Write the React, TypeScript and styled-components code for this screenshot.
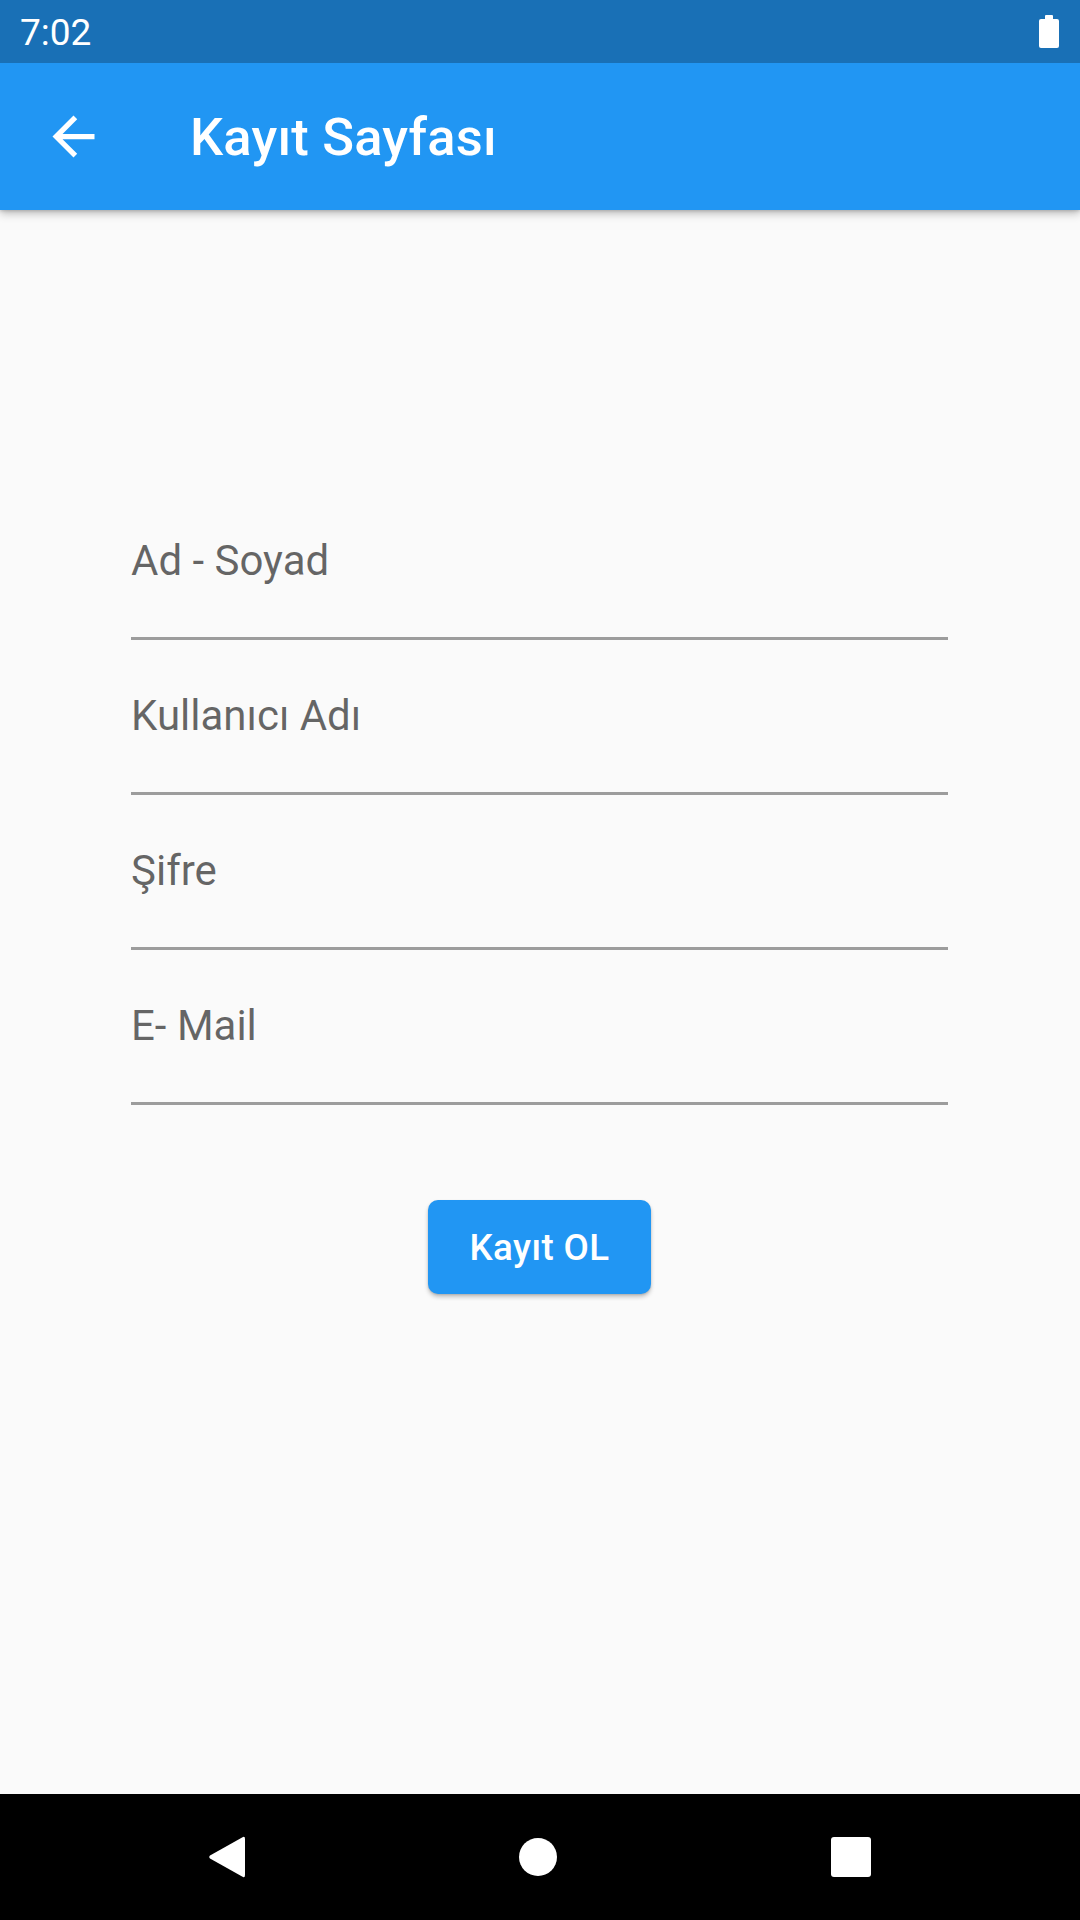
import React from 'react';
import styled, { createGlobalStyle } from 'styled-components';

const GlobalStyle = createGlobalStyle`
  html, body {
    margin: 0;
    padding: 0;
    background: #fafafa;
  }
  body {
    font-family: Roboto, "Noto Sans", "Liberation Sans", sans-serif;
  }
`;

const Screen = styled.div`
  width: 1080px;
  height: 1920px;
  display: flex;
  flex-direction: column;
  background: #fafafa;
  overflow: hidden;
`;

const StatusBar = styled.div`
  height: 63px;
  flex-shrink: 0;
  background: #1970b6;
  display: flex;
  align-items: center;
  justify-content: space-between;
  padding: 0 21px 0 20px;
  color: #fff;
  font-size: 37px;
  position: relative;
  z-index: 3;
`;

const Time = styled.span`
  line-height: 1;
  margin-top: 2px;
`;

const AppBar = styled.header`
  height: 147px;
  flex-shrink: 0;
  background: #2196f3;
  display: flex;
  align-items: center;
  padding-left: 42px;
  color: #fff;
  position: relative;
  z-index: 2;
  box-shadow: 0 3px 9px rgba(0, 0, 0, 0.28), 0 1px 3px rgba(0, 0, 0, 0.15);
`;

const BackButton = styled.button`
  width: 63px;
  height: 63px;
  padding: 0;
  border: none;
  background: transparent;
  display: flex;
  align-items: center;
  justify-content: center;
  cursor: pointer;
  margin-right: 85px;
`;

const Title = styled.h1`
  margin: 0;
  font-size: 52.5px;
  font-weight: 500;
  letter-spacing: 0.2px;
`;

const Body = styled.main`
  flex: 1;
  padding: 275px 132px 0 131px;
  display: flex;
  flex-direction: column;
`;

const Field = styled.label`
  display: block;
  padding: 51px 0 52px;
  border-bottom: 3px solid #9c9c9c;
`;

const FieldLabel = styled.span`
  display: block;
  font-size: 42px;
  line-height: 49px;
  color: rgba(0, 0, 0, 0.6);
`;

const SubmitButton = styled.button`
  align-self: center;
  margin-top: 95px;
  width: 223px;
  height: 94px;
  border: none;
  border-radius: 10px;
  background: #2196f3;
  color: #fff;
  font-family: Roboto, "Noto Sans", sans-serif;
  font-size: 36.75px;
  font-weight: 500;
  letter-spacing: 0.4px;
  box-shadow: 0 3px 4px rgba(0, 0, 0, 0.22), 0 1px 2px rgba(0, 0, 0, 0.12);
  cursor: pointer;
`;

const NavBar = styled.nav`
  height: 126px;
  flex-shrink: 0;
  background: #000;
  display: flex;
  align-items: center;
  justify-content: center;
  gap: 274px;
`;

const fields = ['Ad - Soyad', 'Kullanıcı Adı', 'Şifre', 'E- Mail'];

const App: React.FC = () => {
  return (
    <>
      <GlobalStyle />
      <Screen>
        <StatusBar>
          <Time>7:02</Time>
          <svg width="20" height="34" viewBox="0 0 20 34">
            <rect x="6" y="0" width="8" height="5" rx="1" fill="#fff" />
            <rect x="0" y="4" width="20" height="29" rx="2" fill="#fff" />
          </svg>
        </StatusBar>
        <AppBar>
          <BackButton aria-label="Geri">
            <svg width="63" height="63" viewBox="0 0 24 24">
              <path
                d="M20 11H7.83l5.59-5.59L12 4l-8 8 8 8 1.41-1.41L7.83 13H20v-2z"
                fill="#fff"
              />
            </svg>
          </BackButton>
          <Title>Kayıt Sayfası</Title>
        </AppBar>
        <Body>
          {fields.map((f) => (
            <Field key={f}>
              <FieldLabel>{f}</FieldLabel>
            </Field>
          ))}
          <SubmitButton>Kayıt OL</SubmitButton>
        </Body>
        <NavBar>
          <svg width="36" height="42" viewBox="0 0 36 42">
            <path
              d="M34 1 Q36 0 36 3 L36 39 Q36 42 34 41 L1 22.5 Q-0.5 21 1 19.5 Z"
              fill="#fff"
            />
          </svg>
          <svg width="38" height="38" viewBox="0 0 38 38">
            <circle cx="19" cy="19" r="19" fill="#fff" />
          </svg>
          <svg width="40" height="40" viewBox="0 0 40 40">
            <rect x="0" y="0" width="40" height="40" rx="3" fill="#fff" />
          </svg>
        </NavBar>
      </Screen>
    </>
  );
};

export default App;
